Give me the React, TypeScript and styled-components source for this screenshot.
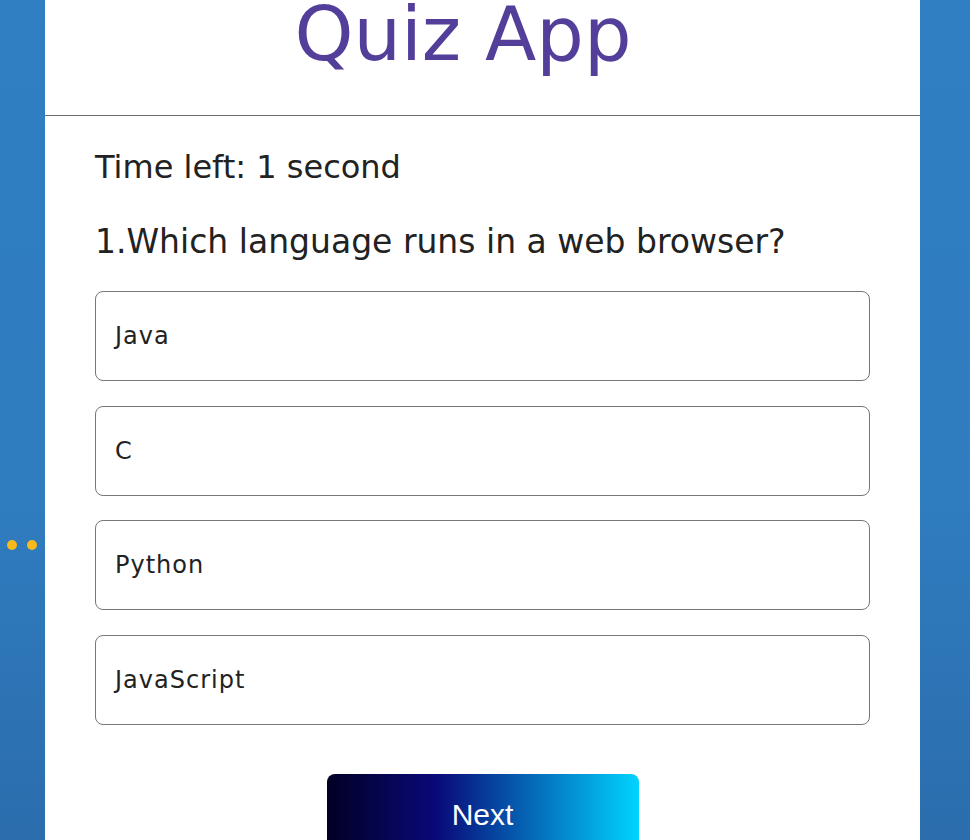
import React from "react";
import styled, { createGlobalStyle } from "styled-components";

const Global = createGlobalStyle`
  html, body { margin: 0; padding: 0; }
  body {
    height: 840px;
    overflow: hidden;
    background: linear-gradient(180deg, #2f7fc2 0%, #2f7cbf 60%, #2b6dad 100%);
    font-family: "DejaVu Sans", "Open Sans", sans-serif;
  }
`;

const Page = styled.div`
  position: relative;
  height: 840px;
`;

const Panel = styled.main`
  margin-left: 45px;
  width: 875px;
  height: 840px;
  background: #ffffff;
  display: flex;
  flex-direction: column;
  overflow: hidden;
`;

const Header = styled.header`
  flex-shrink: 0;
  height: 115px;
  border-bottom: 1px solid #6b6b6b;
  display: flex;
  justify-content: center;
  padding-right: 39px;
`;

const Title = styled.h1`
  margin: 0;
  font-size: 75px;
  font-weight: 400;
  line-height: 0.92;
  color: #533f9a;
`;

const Body = styled.section`
  flex-shrink: 0;
  padding: 29px 50px 0 50px;
  display: flex;
  flex-direction: column;
`;

const Timer = styled.p`
  margin: 0;
  font-size: 32px;
  line-height: 44px;
  color: #222222;
`;

const Question = styled.h2`
  margin: 31px 0 0 0;
  font-size: 33px;
  font-weight: 400;
  line-height: 44px;
  color: #222222;
`;

const Options = styled.ul`
  list-style: none;
  margin: 27px 0 0 0;
  padding: 0;
  display: flex;
  flex-direction: column;
  gap: 24.67px;
`;

const Option = styled.li`
  box-sizing: border-box;
  height: 90px;
  border: 1px solid #777777;
  border-radius: 8px;
  padding: 0 19px;
  display: flex;
  align-items: center;
  font-size: 24px;
  letter-spacing: 1px;
  color: #222222;
`;

const Footer = styled.div`
  display: flex;
  justify-content: center;
  margin-top: 49px;
`;

const NextButton = styled.button`
  width: 312px;
  padding: 26px 0 34px 0;
  border: none;
  border-radius: 8px;
  background: linear-gradient(90deg, #020024 0%, #090979 35%, #00d4ff 100%);
  color: #ffffff;
  font-family: "Liberation Sans", Arial, sans-serif;
  font-size: 30px;
  line-height: 30px;
  cursor: pointer;
`;

const Dots = styled.div`
  position: absolute;
  left: 7px;
  top: 540px;
  display: flex;
  gap: 10px;
`;

const Dot = styled.span`
  width: 10px;
  height: 10px;
  border-radius: 50%;
  background: #f7b91c;
`;

const options = ["Java", "C", "Python", "JavaScript"];

export default function App() {
  return (
    <Page>
      <Global />
      <Dots>
        <Dot />
        <Dot />
      </Dots>
      <Panel>
        <Header>
          <Title>Quiz App</Title>
        </Header>
        <Body>
          <Timer>Time left: 1 second</Timer>
          <Question>1.Which language runs in a web browser?</Question>
          <Options>
            {options.map((o) => (
              <Option key={o}>{o}</Option>
            ))}
          </Options>
          <Footer>
            <NextButton>Next</NextButton>
          </Footer>
        </Body>
      </Panel>
    </Page>
  );
}
